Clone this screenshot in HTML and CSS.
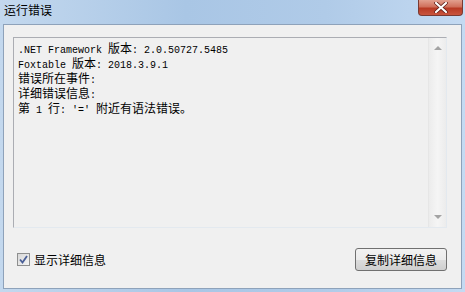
FILE: index.html
```html
<!DOCTYPE html>
<html lang="zh-CN">
<head>
    <meta charset="UTF-8">
    <title>运行错误</title>
    <link rel="stylesheet" href="styles.css">
</head>
<body>
    <div class="window">
        <div class="titlebar">
            <span class="title">运行错误</span>
            <button class="close" aria-label="关闭">
                <svg width="14" height="11" viewBox="0 0 14 11">
                    <path d="M2 1 L12 10 M12 1 L2 10" stroke="#5a1a14" stroke-width="3.6" stroke-linecap="round"/>
                    <path d="M2 1 L12 10 M12 1 L2 10" stroke="#fff" stroke-width="2.2" stroke-linecap="round"/>
                </svg>
            </button>
        </div>

        <div class="client">
            <div class="details">
                <div class="log"><div>.NET Framework <span class="cjk">版本</span>: 2.0.50727.5485</div><div>Foxtable <span class="cjk">版本</span>: 2018.3.9.1</div><div><span class="cjk">错误所在事件</span>:</div><div><span class="cjk">详细错误信息</span>:</div><div><span class="cjk">第</span> 1 <span class="cjk">行</span>: '=' <span class="cjk">附近有语法错误。</span></div></div>
                <!-- 禁用状态的滚动条 -->
                <div class="scrollbar">
                    <span class="arrow up"></span>
                    <span class="arrow down"></span>
                </div>
            </div>

            <div class="footer">
                <label class="check">
                    <span class="box">
                        <svg width="11" height="11" viewBox="0 0 11 11">
                            <path d="M2 5.5 L4.5 8.5 L9 2" fill="none" stroke="#4a5f97" stroke-width="1.8"/>
                        </svg>
                    </span>
                    显示详细信息
                </label>
                <button class="copy">复制详细信息</button>
            </div>
        </div>
    </div>
</body>
</html>
```

FILE: styles.css
```css
body, html {
    margin: 0;
    padding: 0;
    background-color: #b9d1ea;
}

.window {
    width: 465px;
    height: 292px;
    box-sizing: border-box;
    display: flex;
    flex-direction: column;
    padding: 0 3px 3px 3px;
    background: linear-gradient(90deg, #c3d8ee 0%, #a9c6e5 40%, #b0cbe8 70%, #c4daf2 100%);
    font-family: "Noto Sans CJK SC", sans-serif;
}

.titlebar {
    height: 24px;
    display: flex;
    justify-content: space-between;
    align-items: flex-start;
}

.title {
    font-size: 12px;
    line-height: 20px;
    color: #000;
    padding-left: 1px;
}

.close {
    width: 45px;
    height: 16px;
    margin: 0 -1px 0 0;
    padding: 0;
    border: 1px solid #7a3a32;
    border-top: none;
    border-radius: 0 0 4px 4px;
    background: linear-gradient(#e2a08f 0%, #d0705c 45%, #b83a24 55%, #c9553e 100%);
    display: flex;
    justify-content: center;
    align-items: center;
}

.client {
    flex: 1;
    border: 1px solid #8ea2ba;
    background-color: #f0f0f0;
    padding: 12px 14px 0 9px;
    display: flex;
    flex-direction: column;
}

.details {
    height: 191px;
    box-sizing: border-box;
    border: 1px solid #abadb3;
    border-right-color: #e3e9ef;
    border-bottom-color: #e3e9ef;
    background-color: #f0f0f0;
    display: flex;
}

.log {
    flex: 1;
    padding: 4px 0 0 4px;
    font-family: "Liberation Mono", monospace;
    font-size: 10px;
    line-height: 12px;
    white-space: pre;
    color: #000;
}

.cjk {
    display: inline-block;
    height: 12px;
    font-family: "Noto Sans CJK SC", sans-serif;
    font-size: 12px;
    line-height: 12px;
}

.scrollbar {
    width: 17px;
    border-left: 1px solid #e6e6e6;
    background: linear-gradient(90deg, #ececec, #f5f5f5 50%, #ececec);
    display: flex;
    flex-direction: column;
    justify-content: space-between;
    align-items: center;
    padding: 8px 0;
}

.arrow {
    width: 0;
    height: 0;
    border-left: 4px solid transparent;
    border-right: 4px solid transparent;
}

.arrow.up {
    border-bottom: 4px solid #a3a3a3;
}

.arrow.down {
    border-top: 4px solid #a3a3a3;
}

.footer {
    flex: 1;
    display: flex;
    justify-content: space-between;
    align-items: center;
    padding-top: 3px;
}

.check {
    display: flex;
    align-items: center;
    gap: 4px;
    font-size: 12px;
    color: #000;
    padding-left: 4px;
}

.box {
    width: 11px;
    height: 11px;
    border: 1px solid #8e8f8f;
    background: linear-gradient(135deg, #d8d8d8, #f4f4f4);
    display: flex;
}

.copy {
    width: 92px;
    height: 23px;
    padding: 0;
    border: 1px solid #707070;
    border-radius: 3px;
    background: linear-gradient(#f2f2f2 0%, #ebebeb 50%, #dddddd 51%, #cfcfcf 100%);
    font-family: "Noto Sans CJK SC", sans-serif;
    font-size: 12px;
    color: #000;
}
```
